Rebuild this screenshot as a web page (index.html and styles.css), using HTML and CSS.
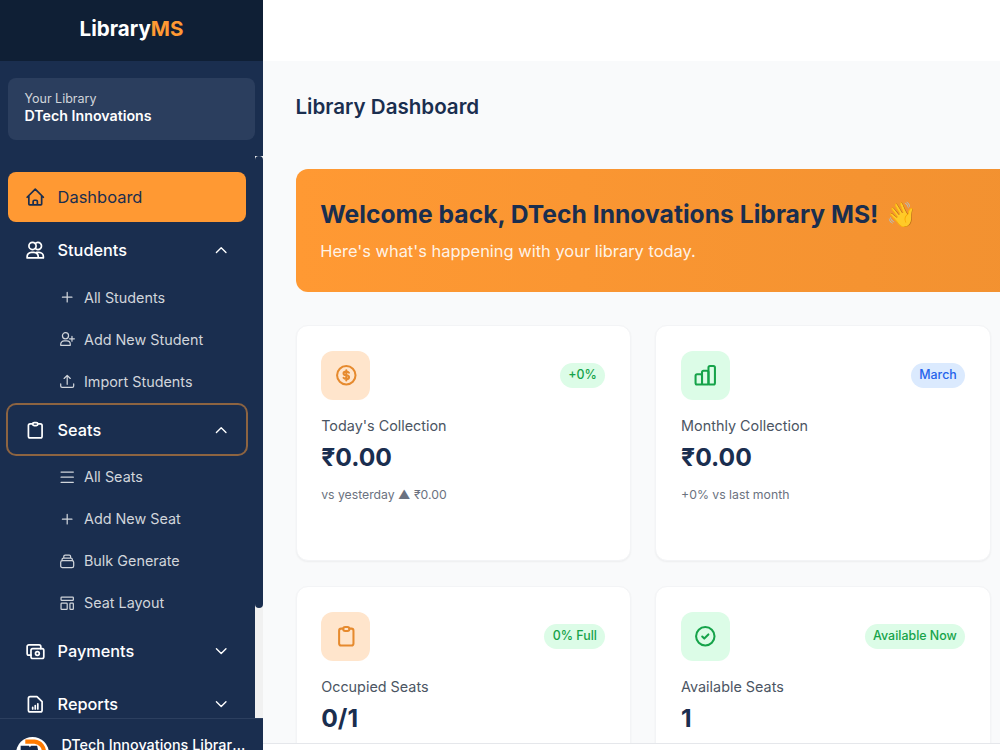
FILE: index.html
```html
<!DOCTYPE html>
<html lang="en">
<head>
  <meta charset="UTF-8">
  <title>Library Dashboard</title>
  <meta name="viewport" content="width=device-width, initial-scale=1.0">
  <link rel="stylesheet" href="styles.css">
</head>
<body>

<aside class="sidebar">
  <div class="brand">Library<span>MS</span></div>

  <div class="library-box">
    <p class="library-label">Your Library</p>
    <p class="library-name">DTech Innovations</p>
  </div>

  <div class="nav-area">
    <nav class="nav">
      <a class="nav-item active">
        <svg class="icon" viewBox="0 0 24 24"><path d="m2.500 12 9.500-9.500 9.500 9.500M4.500 10.500V20a1 1 0 0 0 1 1h13a1 1 0 0 0 1-1v-9.500M9.500 21v-4a1.500 1.500 0 0 1 1.500-1.500h2a1.500 1.500 0 0 1 1.500 1.500v4"/></svg>
        <span>Dashboard</span>
      </a>

      <a class="nav-item">
        <svg class="icon" viewBox="0 0 24 24"><circle cx="8.800" cy="7" r="4.200"/><path d="M12 4.200a4.200 4.200 0 1 1 0 5.600M2.500 21v-1.500a5 5 0 0 1 5-5h3a5 5 0 0 1 5 5V21ZM13.500 14.500h3a5 5 0 0 1 5 5V21h-6"/></svg>
        <span>Students</span>
        <svg class="chevron" viewBox="0 0 24 24"><path d="m5 15.500 7-7 7 7"/></svg>
      </a>
      <div class="subnav">
        <a><svg viewBox="0 0 24 24"><path d="M12 5v14M5 12h14"/></svg>All Students</a>
        <a><svg viewBox="0 0 24 24"><circle cx="9.500" cy="7" r="4.500"/><path d="M2.500 21v-1.500a5 5 0 0 1 5-5h4a5 5 0 0 1 5 5V21ZM19 8v7M15.500 11.500h7"/></svg>Add New Student</a>
        <a><svg viewBox="0 0 24 24"><path d="M2.500 16v3a2 2 0 0 0 2 2h15a2 2 0 0 0 2-2v-3M12 16.500V3.500M7.500 8l4.500-4.500L16.500 8"/></svg>Import Students</a>
      </div>

      <a class="nav-item focused">
        <svg class="icon" viewBox="0 0 24 24"><path d="M9 4.500H6a2 2 0 0 0-2 2V19a2 2 0 0 0 2 2h12a2 2 0 0 0 2-2V6.500a2 2 0 0 0-2-2h-3"/><rect x="9" y="3" width="6" height="3.500" rx="1.700"/></svg>
        <span>Seats</span>
        <svg class="chevron" viewBox="0 0 24 24"><path d="m5 15.500 7-7 7 7"/></svg>
      </a>
      <div class="subnav">
        <a><svg viewBox="0 0 24 24"><path d="M3 4.500h18M3 12h18M3 19.500h18"/></svg>All Seats</a>
        <a><svg viewBox="0 0 24 24"><path d="M12 5v14M5 12h14"/></svg>Add New Seat</a>
        <a><svg viewBox="0 0 24 24"><rect x="2.500" y="11" width="19" height="10.500" rx="2.500"/><path d="M4.500 11V9.500a2 2 0 0 1 2-2h11a2 2 0 0 1 2 2V11M7 7.500V5a2 2 0 0 1 2-2h6a2 2 0 0 1 2 2v2.500"/></svg>Bulk Generate</a>
        <a><svg viewBox="0 0 24 24"><rect x="3" y="3" width="18" height="5" rx="1"/><rect x="3" y="12" width="9" height="9" rx="1"/><rect x="16" y="12" width="5" height="9" rx="1"/></svg>Seat Layout</a>
      </div>

      <a class="nav-item">
        <svg class="icon" viewBox="0 0 24 24"><rect x="7" y="9" width="15" height="11.500" rx="2"/><path d="M7 16.500H4.500a2 2 0 0 1-2-2v-8a2 2 0 0 1 2-2h12a2 2 0 0 1 2 2V9"/><circle cx="14.500" cy="14.700" r="2.200"/></svg>
        <span>Payments</span>
        <svg class="chevron" viewBox="0 0 24 24"><path d="m5 8.500 7 7 7-7"/></svg>
      </a>
      <a class="nav-item">
        <svg class="icon" viewBox="0 0 24 24"><path d="M4 5a2 2 0 0 1 2-2h8l6 6v10a2 2 0 0 1-2 2H6a2 2 0 0 1-2-2ZM9 17.500v-2M12 17.500v-4M15 17.500v-6"/></svg>
        <span>Reports</span>
        <svg class="chevron" viewBox="0 0 24 24"><path d="m5 8.500 7 7 7-7"/></svg>
      </a>
    </nav>
    <div class="scroll-track"><div class="scroll-thumb"></div></div>
  </div>

  <div class="user">
    <svg class="avatar" viewBox="0 0 32 32">
      <circle cx="16" cy="16" r="16" fill="#fff" stroke="none"/>
      <path d="M9 4.500h9A10 10 0 0 1 27 16" fill="none" stroke="#ff7a00" stroke-width="4" stroke-linecap="butt"/>
      <path d="M4.500 8.500h8l1 1.500 1-1.500h6l1.500 7H4.500z" fill="#14284b" stroke="none"/>
    </svg>
    <span>DTech Innovations Library MS</span>
  </div>
</aside>

<main class="main">
  <header class="topbar"></header>

  <div class="content">
    <h1>Library Dashboard</h1>

    <section class="banner">
      <h2>Welcome back, DTech Innovations Library MS! <span class="wave">👋</span></h2>
      <p>Here's what's happening with your library today.</p>
    </section>

    <section class="cards">
      <div class="card">
        <div class="card-top">
          <div class="tile orange"><svg viewBox="0 0 24 24"><circle cx="12" cy="12" r="9"/><path d="M14.600 9.500c-.5-.7-1.500-1.100-2.600-1.100-1.600 0-2.700.7-2.700 1.800s1.100 1.600 2.700 1.800 2.700.7 2.700 1.800-1.100 1.800-2.700 1.800c-1.200 0-2.200-.4-2.700-1.200M12 7v10"/></svg></div>
          <span class="badge green">+0%</span>
        </div>
        <p class="label">Today's Collection</p>
        <p class="value">₹0.00</p>
        <p class="note">vs yesterday ▲ ₹0.00</p>
      </div>

      <div class="card">
        <div class="card-top">
          <div class="tile green"><svg viewBox="0 0 24 24"><rect x="2.500" y="11" width="6.300" height="10" rx="1.500"/><rect x="8.800" y="7.500" width="6.300" height="13.500" rx="1.500"/><rect x="15.100" y="3" width="6.300" height="18" rx="1.500"/></svg></div>
          <span class="badge blue">March</span>
        </div>
        <p class="label">Monthly Collection</p>
        <p class="value">₹0.00</p>
        <p class="note">+0% vs last month</p>
      </div>

      <div class="card">
        <div class="card-top">
          <div class="tile orange"><svg viewBox="0 0 24 24"><path d="M9 4.500H7a2 2 0 0 0-2 2V19a2 2 0 0 0 2 2h10a2 2 0 0 0 2-2V6.500a2 2 0 0 0-2-2h-2"/><rect x="9" y="3" width="6" height="3.800" rx="1.900"/></svg></div>
          <span class="badge green">0% Full</span>
        </div>
        <p class="label">Occupied Seats</p>
        <p class="value">0/1</p>
      </div>

      <div class="card">
        <div class="card-top">
          <div class="tile green"><svg viewBox="0 0 24 24"><circle cx="12" cy="12" r="9"/><path d="m9 12.200 2 2 4-4"/></svg></div>
          <span class="badge green">Available Now</span>
        </div>
        <p class="label">Available Seats</p>
        <p class="value">1</p>
      </div>
    </section>
  </div>

  <footer class="footer"></footer>
</main>

</body>
</html>
```
FILE: styles.css
```css
* { box-sizing: border-box; }
html { font-size: 16.44px; }
body {
  margin: 0;
  display: flex;
  height: 100vh;
  overflow: hidden;
  background: #f9fafb;
  font-family: Inter, "Liberation Sans", sans-serif;
  color: #1a2e4f;
}
h1, h2, p { margin: 0; }
svg {
  fill: none;
  stroke: currentColor;
  stroke-width: 2;
  stroke-linecap: round;
  stroke-linejoin: round;
  flex-shrink: 0;
}

/* sidebar */
.sidebar {
  width: 263px;
  flex-shrink: 0;
  height: 100vh;
  display: flex;
  flex-direction: column;
  background: #1a2e4f;
  color: #fff;
}
.brand {
  height: 61px;
  flex-shrink: 0;
  display: flex;
  align-items: center;
  justify-content: center;
  padding-bottom: 4px;
  background: #0f1f35;
  font-size: 1.25rem;
  font-weight: 700;
}
.brand span { color: #ff9933; }
.library-box {
  height: 62px;
  flex-shrink: 0;
  margin: 17px 8.5px 16px 8px;
  padding: 12px 16.5px;
  border-radius: 8px;
  background: #2b3e5e;
}
.library-label {
  font-size: 0.76rem;
  line-height: 18px;
  color: #d1d5db;
}
.library-name {
  font-size: 0.865rem;
  line-height: 16px;
  font-weight: 600;
}
.nav-area {
  flex: 1;
  min-height: 0;
  display: flex;
  overflow: hidden;
}
.nav {
  flex: 1;
  display: flex;
  flex-direction: column;
  gap: 4.1px;
  padding: 16.4px 8.8px 0 8.2px;
}
.nav-item {
  height: 49.3px;
  flex-shrink: 0;
  display: flex;
  align-items: center;
  gap: 12.5px;
  padding: 0 16.4px;
  border-radius: 8px;
  font-size: 0.99rem;
  font-weight: 500;
}
.nav-item span { flex: 1; }
.nav-item.active {
  background: #ff9933;
  color: #1a2e4f;
  font-size: 1rem;
  font-weight: 400;
}
.nav-item.focused { box-shadow: 0 0 0 2px rgba(255, 153, 51, 0.5); }
.icon {
  width: 20.5px;
  height: 20.5px;
}
.chevron {
  width: 16.4px;
  height: 16.4px;
}
.subnav {
  display: flex;
  flex-direction: column;
  gap: 4.1px;
  padding-left: 51px;
}
.subnav a {
  height: 37.9px;
  display: flex;
  align-items: center;
  gap: 8.4px;
  padding-bottom: 1px;
  font-size: 0.875rem;
  color: #d1d5db;
}
.subnav svg {
  width: 16.4px;
  height: 16.4px;
  stroke-width: 1.8;
}
.scroll-track {
  width: 8px;
  background: #f1f1f1;
}
.scroll-thumb {
  height: 452px;
  border-radius: 4px;
  background: #1a2e4f;
}
.user {
  height: 32px;
  flex-shrink: 0;
  display: flex;
  align-items: flex-start;
  gap: 12px;
  padding: 18px 16.4px 0;
  border-top: 1px solid #2c3f5f;
  overflow: hidden;
}
.avatar {
  width: 33px;
  height: 33px;
}
.user span {
  font-size: 0.875rem;
  font-weight: 500;
  line-height: 16px;
  white-space: nowrap;
  overflow: hidden;
  text-overflow: ellipsis;
}

/* main area */
.main {
  flex: 1;
  min-width: 0;
  display: flex;
  flex-direction: column;
}
.topbar {
  height: 61px;
  flex-shrink: 0;
  background: #fff;
}
.content {
  flex: 1;
  min-height: 0;
  padding: 32px 33px 0 32.500px;
  overflow: hidden;
}
h1 {
  font-size: 1.25rem;
  line-height: 28px;
  font-weight: 600;
}
.banner {
  width: 1416px;
  height: 123px;
  margin: 48px 0 33px;
  padding: 28px 24.7px;
  border-radius: 12px;
  background: linear-gradient(to right, #ff9933, #e68a2e);
}
.banner h2 {
  font-size: 1.5rem;
  line-height: 34px;
  font-weight: 700;
}
.wave { margin-left: 2px; }
.banner p {
  margin-top: 8px;
  font-size: 1rem;
  line-height: 25px;
  color: rgba(255, 255, 255, 0.9);
}
.cards {
  display: grid;
  grid-template-columns: repeat(2, 335.300px);
  grid-auto-rows: 236px;
  gap: 25px 24.6px;
}
.card {
  padding: 24.7px;
  border: 1px solid #f3f4f6;
  border-radius: 12px;
  background: #fff;
  box-shadow: 0 1px 2px rgba(0, 0, 0, 0.05);
}
.card-top {
  display: flex;
  align-items: center;
  justify-content: space-between;
  margin-bottom: 16.4px;
}
.tile {
  width: 49.3px;
  height: 49.3px;
  display: flex;
  align-items: center;
  justify-content: center;
  border-radius: 12px;
}
.tile svg {
  width: 24.6px;
  height: 24.6px;
}
.tile.orange {
  background: #ffe5cc;
  color: #e68a2e;
}
.badge {
  padding: 4px 8.2px;
  border-radius: 13px;
  font-size: 0.755rem;
  line-height: 16.500px;
  font-weight: 500;
}
.green {
  background: #dcfce7;
  color: #16a34a;
}
.blue {
  background: #dbeafe;
  color: #2563eb;
}
.label {
  font-size: 0.875rem;
  line-height: 20px;
  color: #4b5563;
}
.value {
  margin-top: 4px;
  font-size: 1.5rem;
  line-height: 34px;
  font-weight: 700;
}
.note {
  margin-top: 12px;
  font-size: 0.745rem;
  line-height: 18px;
  color: #6b7280;
}
.footer {
  height: 7px;
  flex-shrink: 0;
  border-top: 1px solid #e5e7eb;
  background: #fff;
}
```
